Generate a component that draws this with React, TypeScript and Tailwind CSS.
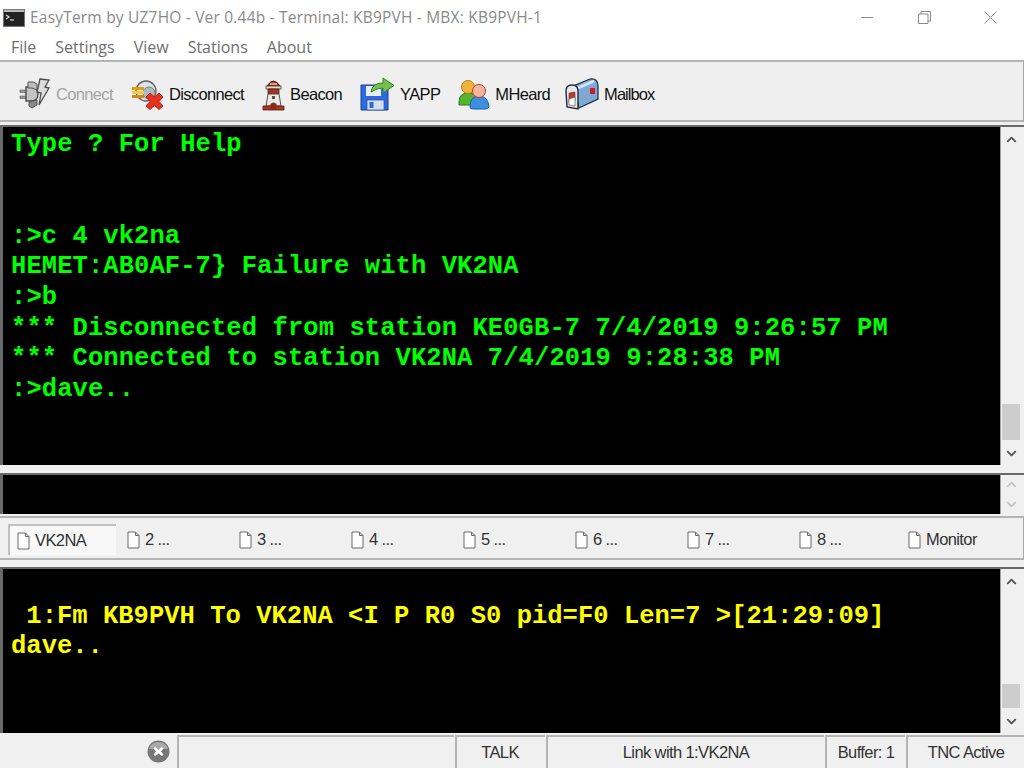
import { ChevronDown, ChevronUp } from 'lucide-react';

const MENU = ['File', 'Settings', 'View', 'Stations', 'About'];
const TABS = ['2 ...', '3 ...', '4 ...', '5 ...', '6 ...', '7 ...', '8 ...'];

const GREEN = [
  'Type ? For Help',
  '',
  '',
  ':>c 4 vk2na',
  'HEMET:AB0AF-7} Failure with VK2NA',
  ':>b',
  '*** Disconnected from station KE0GB-7 7/4/2019 9:26:57 PM',
  '*** Connected to station VK2NA 7/4/2019 9:28:38 PM',
  ':>dave..',
];

const YELLOW = [
  '',
  ' 1:Fm KB9PVH To VK2NA <I P R0 S0 pid=F0 Len=7 >[21:29:09]',
  'dave..',
];

const ConnectIcon = () => (
  <svg width="32" height="32" viewBox="0 0 32 32" className="shrink-0">
    <path d="M1 12h6v2.5H1zM1 18h6v2.5H1z" fill="#9a9a9a" stroke="#555" strokeWidth="0.6" />
    <path d="M7 9h5q7 0 7 7t-7 7H7z" fill="#c4c4c4" stroke="#4d4d4d" strokeWidth="1.4" />
    <path d="M9 4q6-1 9 2v6l-5-2H9z" fill="#bdbdbd" stroke="#555" />
    <path d="M10 24l8-2v5l-5 3-3-2z" fill="#8a8a8a" stroke="#555" />
    <path d="M21 1l9 1-4 7 4 1-10 17 2-12-4-1z" fill="#dcdcdc" stroke="#4d4d4d" strokeWidth="1.3" />
  </svg>
);

const DisconnectIcon = () => (
  <svg width="33" height="32" viewBox="0 0 33 32" className="shrink-0">
    <circle cx="15" cy="13" r="10" fill="#dfe4e8" stroke="#5f6468" strokeWidth="1.4" />
    <circle cx="18" cy="15" r="6" fill="#aeb8c0" stroke="#767b80" />
    <path d="M1 9h12v3H1z" fill="#e39a1c" />
    <path d="M1 13h12v3H1z" fill="#f4ce3a" />
    <path d="M1 17h12v3H1z" fill="#d8871c" />
    <path d="M15 19l4-4 4.5 4 4.5-4 4 4-4 4.5 4 4.5-4 3.500-4.500-4-4.500 4-4-3.500 4-4.500z" fill="#e8321f" stroke="#a81c0e" strokeWidth="0.9" />
  </svg>
);

const BeaconIcon = () => (
  <svg width="23" height="34" viewBox="0 0 23 34" className="shrink-0">
    <path d="M5 9Q11.5-1 18 9z" fill="#bb3a22" stroke="#4a1a10" />
    <path d="M8 7h7" stroke="#e8b8a0" strokeWidth="1.5" />
    <rect x="4" y="9" width="15" height="3" fill="#ded8cc" stroke="#444" strokeWidth="0.8" />
    <path d="M6 12h11v5H6z" fill="#b02f1b" stroke="#4a1a10" strokeWidth="0.8" />
    <path d="M6 17h11l2 12H4z" fill="#ece9e2" stroke="#555" />
    <rect x="10" y="19" width="3" height="3" fill="#555" />
    <path d="M1 29h21v4H1z" fill="#b5341f" stroke="#4a1a10" strokeWidth="0.8" />
    <path d="M8.5 33v-6q3-3 6 0v6z" fill="#8a2a18" />
  </svg>
);

const YappIcon = () => (
  <svg width="35" height="34" viewBox="0 0 35 34" className="shrink-0">
    <path d="M1 8h24l3 3v22H1z" fill="#2c6ae0" stroke="#1c3f95" />
    <rect x="6" y="9" width="15" height="10" fill="#e9eff7" />
    <rect x="7" y="23" width="17" height="10" fill="#d5deea" stroke="#2a4ea8" strokeWidth="0.7" />
    <rect x="9.5" y="25" width="4" height="6" fill="#2c6ae0" />
    <path d="M11 15Q12 6 23 6V1l11 7.5L23 16v-5q-6 0-12 4z" fill="#71c24c" stroke="#3b7f2c" />
  </svg>
);

const MHeardIcon = () => (
  <svg width="32" height="32" viewBox="0 0 32 32" className="shrink-0">
    <path d="M1 24q0-9 9-9t9 9v3H1z" fill="#55b52f" stroke="#2f7d1c" />
    <circle cx="10" cy="9" r="6.5" fill="#f2b33d" stroke="#b87a1a" />
    <path d="M12 29q0-11 9-11t10 11q-1 2-4 2H15q-3 0-3-2z" fill="#3f8fe0" stroke="#1f5aa8" />
    <circle cx="21" cy="13" r="6.5" fill="#f5b5a0" stroke="#c0392b" />
  </svg>
);

const MailboxIcon = () => (
  <svg width="34" height="34" viewBox="0 0 34 34" className="shrink-0">
    <path d="M8 9L25 2q8-1 8 7v13L14 31z" fill="#7fa9d4" stroke="#1c2b3a" strokeWidth="1.2" />
    <path d="M13 11l16-7" stroke="#d6e4f2" strokeWidth="3" />
    <path d="M1 14q0-6 6-6t6 6v18l-11-2z" fill="#e8e8e8" stroke="#1c2b3a" strokeWidth="1.4" />
    <path d="M4 16l6-1v9l-6 1z" fill="#c8342a" stroke="#444" strokeWidth="0.6" />
    <path d="M4 22l6-2v9l-6-1z" fill="#fff" stroke="#444" strokeWidth="0.6" />
    <rect x="25" y="11" width="5" height="6" fill="#c8202a" />
  </svg>
);

const PageIcon = () => (
  <svg width="13" height="18" viewBox="0 0 13 18" className="shrink-0">
    <path d="M1 1h7.5L12 4.5V17H1z" fill="#fff" stroke="#6b6b6b" />
    <path d="M8.500 1v3.500H12" fill="none" stroke="#6b6b6b" />
  </svg>
);

const ToolButton = ({
  icon,
  label,
  disabled,
  className = '',
}: {
  icon: React.ReactNode;
  label: string;
  disabled?: boolean;
  className?: string;
}) => (
  <div className={`flex items-center gap-[5px] ${className}`}>
    {icon}
    <span className={disabled ? 'text-[#a5a5a5]' : 'text-[#111]'}>{label}</span>
  </div>
);

const Scrollbar = ({
  thumbClass,
  disabled,
}: {
  thumbClass?: string;
  disabled?: boolean;
}) => {
  const arrow = disabled ? '#c4c4c4' : '#555';
  return (
    <div className="w-[21px] shrink-0 flex flex-col justify-between bg-[#f0f0f0] border-l border-[#a0a0a0]">
      <div className="h-[24px] flex items-center justify-center">
        <ChevronUp size={15} strokeWidth={3} color={arrow} />
      </div>
      {thumbClass && (
        <div className="flex-1 flex flex-col justify-end">
          <div className={thumbClass} />
        </div>
      )}
      <div className="h-[24px] flex items-center justify-center">
        <ChevronDown size={15} strokeWidth={3} color={arrow} />
      </div>
    </div>
  );
};

const TermLines = ({ lines, color }: { lines: string[]; color: string }) => (
  <div
    className={`flex-1 bg-black overflow-hidden pl-[8px] font-['Liberation_Mono',monospace] font-bold text-[25.5px] leading-[30.6px] whitespace-pre ${color}`}
  >
    {lines.map((line, i) => (
      <div key={i} className="h-[30.6px]">
        {line}
      </div>
    ))}
  </div>
);

export default function App() {
  return (
    <div className="w-[1024px] h-[768px] overflow-hidden flex flex-col bg-[#f0f0f0] font-['Liberation_Sans',sans-serif] text-[16px] text-[#222]">
      {/* title bar */}
      <div className="h-[34px] shrink-0 bg-white flex items-center pl-[3px] pt-[1px]">
        <svg width="22" height="18" viewBox="0 0 22 18" className="shrink-0">
          <rect x="0.5" y="0.5" width="21" height="17" fill="#222" stroke="#777" />
          <rect x="1" y="1" width="20" height="2" fill="#bbb" />
          <path d="M3 6l3 2-3 2" fill="none" stroke="#ddd" strokeWidth="1.2" />
          <path d="M7 11h4" stroke="#ddd" strokeWidth="1.2" />
        </svg>
        <span className="ml-[5px] font-['Open_Sans',sans-serif] text-[15.5px] text-[#8a8a8a] tracking-[0.2px]">
          EasyTerm by UZ7HO - Ver 0.44b - Terminal: KB9PVH - MBX: KB9PVH-1
        </span>
        <div className="ml-auto flex items-center">
          <div className="w-[46px] flex justify-center">
            <div className="w-[12px] h-px bg-[#8a8a8a]" />
          </div>
          <div className="w-[68px] flex justify-center">
            <svg width="13" height="13" viewBox="0 0 13 13">
              <path d="M.5 3h9.5v9.5H.5zM3 3V.5h9.5V10H10" fill="none" stroke="#8a8a8a" />
            </svg>
          </div>
          <div className="w-[66px] flex justify-center pr-[2px]">
            <svg width="13" height="13" viewBox="0 0 13 13">
              <path d="M.5.5l12 12M12.5.5l-12 12" stroke="#8a8a8a" />
            </svg>
          </div>
        </div>
      </div>

      {/* menu */}
      <div className="h-[26px] shrink-0 bg-white flex items-center gap-[19px] pl-[11px] pb-[1px] font-['Open_Sans',sans-serif] text-[16px] text-[#6e6e6e]">
        {MENU.map((m) => (
          <span key={m}>{m}</span>
        ))}
      </div>

      {/* toolbar */}
      <div className="h-[62px] shrink-0 border-y-2 border-[#b4b4b4] border-r border-r-[#a8a8a8] flex items-center gap-[18px] pl-[19px] pt-[6px] bg-[#efefef] text-[16.5px] tracking-[-0.65px]">
        <ToolButton icon={<ConnectIcon />} label="Connect" disabled />
        <ToolButton icon={<DisconnectIcon />} label="Disconnect" />
        <ToolButton icon={<BeaconIcon />} label="Beacon" />
        <ToolButton icon={<YappIcon />} label="YAPP" />
        <ToolButton icon={<MHeardIcon />} label="MHeard" />
        <ToolButton icon={<MailboxIcon />} label="Mailbox" className="-ml-[3px] tracking-[-0.95px]" />
      </div>

      {/* terminal */}
      <div className="mt-[3px] h-[340px] shrink-0 flex border-t-2 border-l-[3px] border-[#696969] pr-[3px]">
        <div className="flex-1 flex flex-col bg-black pt-[3px]">
          <TermLines lines={GREEN} color="text-[#00ff00] tracking-[0.08px]" />
        </div>
        <Scrollbar thumbClass="h-[36px] mb-px mx-[1px] bg-[#cdcdcd]" />
      </div>

      {/* input */}
      <div className="mt-[8px] h-[41px] shrink-0 flex border-t-2 border-l-[3px] border-[#696969] pr-[3px]">
        <div className="flex-1 bg-black" />
        <Scrollbar disabled />
      </div>

      {/* tabs */}
      <div className="mt-[2px] h-[44px] shrink-0 border-y-2 border-[#b4b4b4] border-r border-r-[#a8a8a8] flex items-center pl-[8px] pt-[3px] text-[16.5px] tracking-[-0.6px] text-[#333]">
        <div className="w-[108px] h-[31px] flex items-center gap-[5px] pl-[7px] bg-[#f8f8f8] border-t-2 border-l-2 border-[#c0c0c0]">
          <PageIcon />
          <span>VK2NA</span>
        </div>
        <div className="flex pl-[1px]">
          {TABS.map((t) => (
            <div key={t} className="w-[112px] flex items-center gap-[5px] pl-[10px]">
              <PageIcon />
              <span>{t}</span>
            </div>
          ))}
        </div>
        <div className="flex items-center gap-[5px] pl-[7px]">
          <PageIcon />
          <span>Monitor</span>
        </div>
      </div>

      {/* monitor */}
      <div className="mt-[7px] h-[166px] shrink-0 flex border-t-2 border-l-[3px] border-[#696969] pr-[3px]">
        <div className="flex-1 flex flex-col bg-black pt-[2px]">
          <TermLines lines={YELLOW} color="text-[#ffff00] tracking-[0.02px]" />
        </div>
        <Scrollbar thumbClass="h-[24px] mb-px mx-[1px] bg-[#cdcdcd]" />
      </div>

      {/* status bar */}
      <div className="flex-1 flex pt-[2px] text-[16.5px] tracking-[-0.6px] text-[#333]">
        <div className="w-[177px] flex items-center justify-end pr-[7px]">
          <svg width="23" height="23" viewBox="0 0 23 23">
            <circle cx="11.5" cy="11.5" r="11" fill="#777" />
            <path d="M2 9a10 10 0 0 1 19 0z" fill="#aaa" />
            <path d="M8 7l3.5 2.5L15 7l1.5 1.5L14 11.5l2.5 3L15 16l-3.5-2.5L8 16l-1.5-1.5L9 11.5l-2.5-3z" fill="#fff" />
          </svg>
        </div>
        <div className="w-[277px] border-t-2 border-l-2 border-[#b4b4b4]" />
        <div className="w-[90px] ml-px border-t-2 border-l-2 border-[#b4b4b4] flex items-center justify-center pr-[2px]">TALK</div>
        <div className="w-[278px] ml-px border-t-2 border-l-2 border-[#b4b4b4] flex items-center justify-center">Link with 1:VK2NA</div>
        <div className="w-[80px] ml-px border-t-2 border-l-2 border-[#b4b4b4] flex items-center justify-center">Buffer: 1</div>
        <div className="flex-1 ml-px border-t-2 border-l-2 border-[#b4b4b4] flex items-center justify-center">TNC Active</div>
      </div>
    </div>
  );
}
